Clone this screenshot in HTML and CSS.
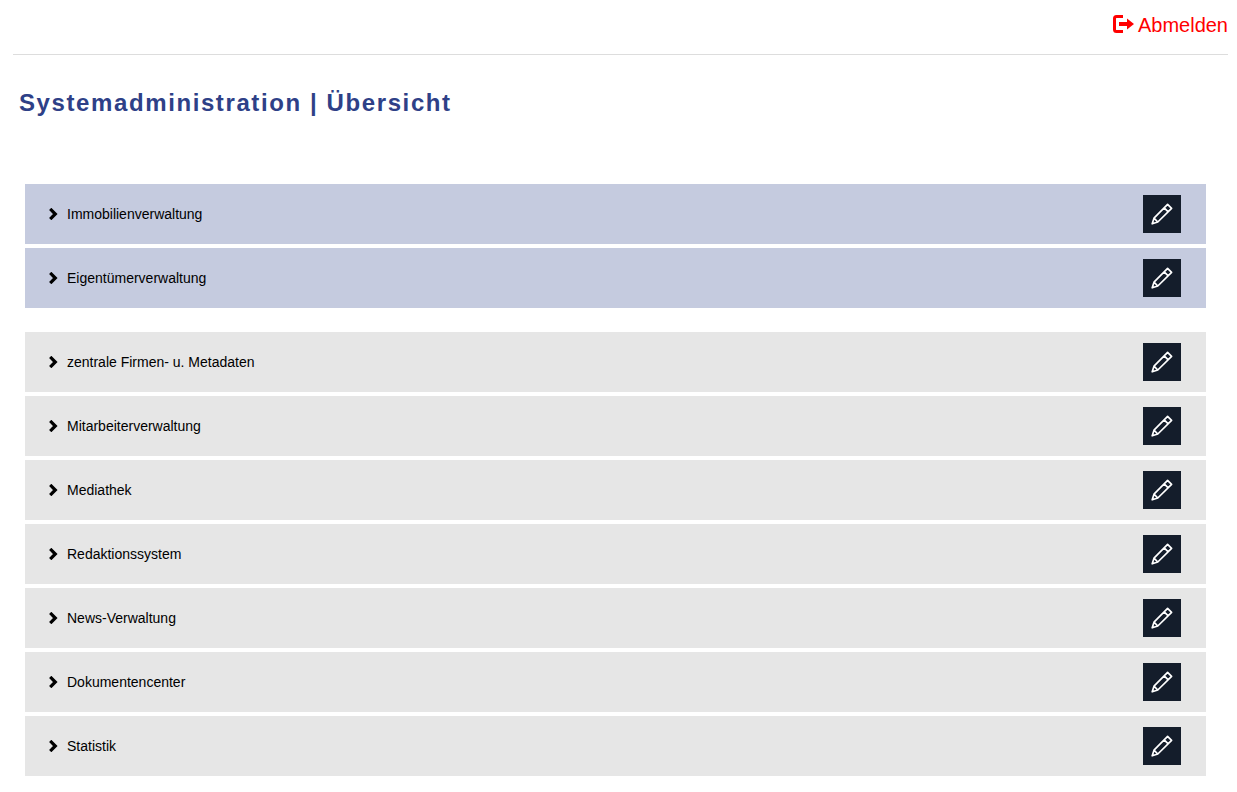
FILE: index.html
```html
<!DOCTYPE html>
<html lang="de">
<head>
    <meta charset="UTF-8">
    <title>Systemadministration | Übersicht</title>
    <link rel="stylesheet" href="styles.css">
</head>
<body>

<svg class="defs" width="0" height="0">
    <symbol id="pencil" viewBox="0 0 22 22">
        <path d="M16.6 1.4 L20.6 5.4 L6.8 19 L1.2 20.8 L3 15.2 Z M13.2 4.8 L17.2 8.8 M3 15.2 L6.8 19" fill="none" stroke="currentColor" stroke-width="1.7" stroke-linejoin="round"/>
    </symbol>
    <symbol id="chevron" viewBox="0 0 10 12">
        <path d="M2.2 0.9 L7.3 6 L2.2 11.1" fill="none" stroke="currentColor" stroke-width="3.2"/>
    </symbol>
</svg>

<div class="topbar">
    <a class="logout" href="#">
        <svg class="logout-icon" viewBox="0 0 21 18">
            <path d="M10 1.5 H3.5 Q1.5 1.5 1.5 3.5 V14.5 Q1.5 16.5 3.5 16.5 H10" fill="none" stroke="currentColor" stroke-width="3"/>
            <path d="M6 7 H14 V3.5 L21 9 L14 14.5 V11 H6 Z" fill="currentColor"/>
        </svg>
        Abmelden
    </a>
</div>

<h1>Systemadministration | Übersicht</h1>

<div class="group group-primary">
    <div class="row"><svg class="chevron"><use href="#chevron"/></svg><span class="label">Immobilienverwaltung</span><a class="edit" href="#"><svg><use href="#pencil"/></svg></a></div>
    <div class="row"><svg class="chevron"><use href="#chevron"/></svg><span class="label">Eigentümerverwaltung</span><a class="edit" href="#"><svg><use href="#pencil"/></svg></a></div>
</div>

<div class="group">
    <div class="row"><svg class="chevron"><use href="#chevron"/></svg><span class="label">zentrale Firmen- u. Metadaten</span><a class="edit" href="#"><svg><use href="#pencil"/></svg></a></div>
    <div class="row"><svg class="chevron"><use href="#chevron"/></svg><span class="label">Mitarbeiterverwaltung</span><a class="edit" href="#"><svg><use href="#pencil"/></svg></a></div>
    <div class="row"><svg class="chevron"><use href="#chevron"/></svg><span class="label">Mediathek</span><a class="edit" href="#"><svg><use href="#pencil"/></svg></a></div>
    <div class="row"><svg class="chevron"><use href="#chevron"/></svg><span class="label">Redaktionssystem</span><a class="edit" href="#"><svg><use href="#pencil"/></svg></a></div>
    <div class="row"><svg class="chevron"><use href="#chevron"/></svg><span class="label">News-Verwaltung</span><a class="edit" href="#"><svg><use href="#pencil"/></svg></a></div>
    <div class="row"><svg class="chevron"><use href="#chevron"/></svg><span class="label">Dokumentencenter</span><a class="edit" href="#"><svg><use href="#pencil"/></svg></a></div>
    <div class="row"><svg class="chevron"><use href="#chevron"/></svg><span class="label">Statistik</span><a class="edit" href="#"><svg><use href="#pencil"/></svg></a></div>
</div>

</body>
</html>
```

FILE: styles.css
```css
body {
    font-family: "Liberation Sans", Arial, sans-serif;
    background-color: #fff;
    color: #000;
    margin: 0;
    padding: 0 9px 16px 13px;
}
.defs {
    display: block;
    height: 0;
}
.topbar {
    display: flex;
    justify-content: flex-end;
    align-items: center;
    height: 50px;
    padding-bottom: 4px;
    border-bottom: 1px solid #ddd;
}
.logout {
    display: flex;
    align-items: center;
    gap: 4px;
    color: #f00;
    font-size: 20px;
    text-decoration: none;
}
.logout-icon {
    width: 21px;
    height: 18px;
    margin-top: -3px;
}
h1 {
    margin: 33px 0 0 6px;
    font-size: 24px;
    line-height: 30px;
    font-weight: bold;
    letter-spacing: 1.6px;
    color: #2e4087;
}
.group {
    margin: 0 22px 24px 12px;
    display: flex;
    flex-direction: column;
    gap: 4px;
}
.group:last-child {
    margin-bottom: 0;
}
.group-primary {
    margin-top: 66px;
}
.row {
    display: flex;
    align-items: center;
    height: 60px;
    padding: 0 25px 0 23px;
    background-color: #e6e6e6;
    font-size: 14px;
}
.group-primary .row {
    background-color: #c5cbdf;
}
.chevron {
    width: 10px;
    height: 12px;
    color: #000;
}
.label {
    margin-left: 9px;
    flex-grow: 1;
}
.edit {
    display: flex;
    align-items: center;
    justify-content: center;
    width: 38px;
    height: 38px;
    background-color: #141d2b;
    color: #fff;
}
.edit svg {
    width: 22px;
    height: 22px;
}
```
